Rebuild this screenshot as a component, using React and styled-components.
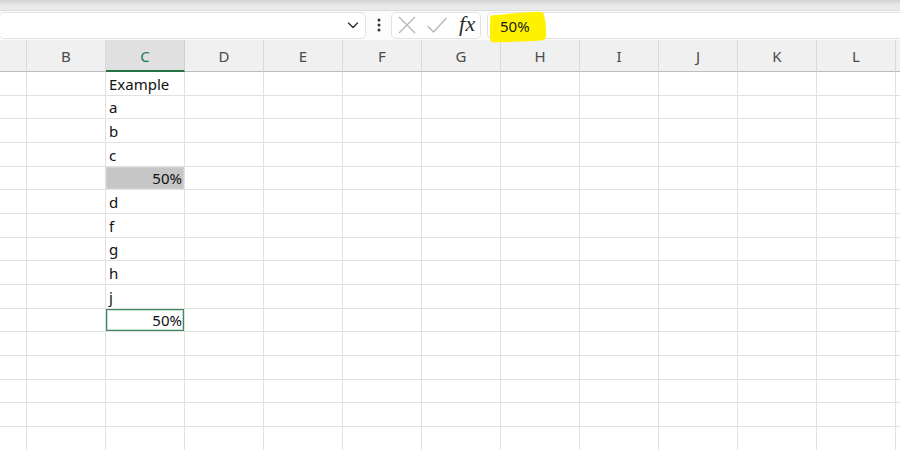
import React from "react";
import styled, { createGlobalStyle } from "styled-components";

const GlobalStyle = createGlobalStyle`
  html, body {
    margin: 0;
    padding: 0;
    background: #ffffff;
    overflow: hidden;
  }
`;

const Page = styled.div`
  width: 900px;
  height: 450px;
  overflow: hidden;
  font-family: "Noto Sans", "Liberation Sans", sans-serif;
  background: #ffffff;
`;

const TopStrip = styled.div`
  height: 11px;
  background: linear-gradient(#d2d2d2, #e6e6e6 45%, #ebebeb);
  border-bottom: 1px solid #dcdcdc;
  box-sizing: border-box;
`;

const FormulaBar = styled.div`
  height: 29px;
  display: flex;
  align-items: center;
  background: #fcfcfc;
  padding: 0 0 1px;
  box-sizing: border-box;
`;

const NameBox = styled.div`
  width: 367px;
  height: 27px;
  margin-left: -1px;
  box-sizing: border-box;
  border: 1px solid #e2e2e2;
  border-radius: 5px;
  background: #ffffff;
  display: flex;
  align-items: center;
  justify-content: flex-end;
  padding-right: 5px;
`;

const Dots = styled.div`
  width: 25px;
  display: flex;
  justify-content: center;
`;

const FxBox = styled.div`
  width: 90px;
  height: 27px;
  box-sizing: border-box;
  border: 1px solid #e2e2e2;
  border-radius: 5px;
  background: #ffffff;
  display: flex;
  align-items: center;
  padding-left: 5px;
  gap: 9px;
`;

const Fx = styled.span`
  font-family: "Liberation Serif", "DejaVu Serif", serif;
  font-style: italic;
  font-size: 22px;
  color: #2b2b2b;
  margin-left: 2px;
  letter-spacing: 0.3px;
  line-height: 1;
  padding-bottom: 3px;
`;

const FormulaInput = styled.div`
  position: relative;
  flex: 1;
  height: 27px;
  margin-left: 6px;
  margin-right: -6px;
  box-sizing: border-box;
  border: 1px solid #e2e2e2;
  border-radius: 5px;
  background: #ffffff;
  display: flex;
  align-items: center;
  padding-left: 12px;
`;

const Highlight = styled.svg`
  position: absolute;
  left: 0;
  top: -3px;
  pointer-events: none;
`;

const FormulaText = styled.span`
  position: relative;
  font-size: 15px;
  color: #1a1a1a;
  padding-top: 1px;
`;

const Sheet = styled.div`
  display: grid;
  grid-template-columns: 27px repeat(11, 79px) 20px;
`;

const HeadCell = styled.div`
  height: 32px;
  box-sizing: border-box;
  background: ${(p) => (p.$active ? "#e0e0e0" : "#f0f0f0")};
  border-right: 1px solid ${(p) => (p.$active ? "#d0d0d0" : "#dadada")};
  border-bottom: ${(p) => (p.$active ? "2px solid #217346" : "1px solid #bcbcbc")};
  color: ${(p) => (p.$active ? "#1b7a50" : "#4a4a4a")};
  font-size: 15px;
  display: flex;
  align-items: center;
  justify-content: center;
  padding-top: ${(p) => (p.$active ? "1px" : "0")};
`;

const Cell = styled.div`
  height: ${(p) => p.$h}px;
  box-sizing: border-box;
  border-right: 1px solid #e1e1e1;
  border-bottom: 1px solid #e1e1e1;
  font-size: 15px;
  color: #111111;
  display: flex;
  align-items: flex-end;
  justify-content: ${(p) => (p.$right ? "flex-end" : "flex-start")};
  padding: 0 2px 1px 3px;
  line-height: 20px;
  white-space: nowrap;
  background: ${(p) => (p.$fill ? "#c6c6c6" : "#ffffff")};
  box-shadow: ${(p) =>
    p.$selected
      ? "inset 0 0 0 1px #3f8a5e, inset 0 0 0 2px #c4ddcd"
      : p.$fill
      ? "inset 0 0 0 1px #d2d2d2"
      : "none"};
`;

const columns = ["", "B", "C", "D", "E", "F", "G", "H", "I", "J", "K", "L", ""];

const cValues = [
  { t: "Example" },
  { t: "a" },
  { t: "b" },
  { t: "c" },
  { t: "50%", right: true, fill: true },
  { t: "d" },
  { t: "f" },
  { t: "g" },
  { t: "h" },
  { t: "j" },
  { t: "50%", right: true, selected: true },
];

const ROWS = 17;
const rowHeights = Array.from({ length: ROWS }, (_, k) =>
  Math.round(72 + (k + 1) * 23.667) - Math.round(72 + k * 23.667)
);

const Chevron = () => (
  <svg width="14" height="14" viewBox="0 0 14 14">
    <path d="M2.5 5 L7 9.5 L11.5 5" fill="none" stroke="#333" strokeWidth="1.4" strokeLinecap="round" strokeLinejoin="round" />
  </svg>
);

const VDots = () => (
  <svg width="4" height="14" viewBox="0 0 4 14">
    <circle cx="2" cy="2" r="1.5" fill="#333" />
    <circle cx="2" cy="7" r="1.5" fill="#333" />
    <circle cx="2" cy="12" r="1.5" fill="#333" />
  </svg>
);

const CrossIcon = () => (
  <svg width="20" height="20" viewBox="0 0 20 20">
    <path d="M2 2 L18 18 M18 2 L2 18" stroke="#b5b5b5" strokeWidth="1.3" fill="none" />
  </svg>
);

const CheckIcon = () => (
  <svg width="22" height="20" viewBox="0 0 22 20">
    <path d="M1.5 11 L7.5 17 L20.5 3" stroke="#b5b5b5" strokeWidth="1.3" fill="none" />
  </svg>
);

export default function App() {
  return (
    <Page>
      <GlobalStyle />
      <TopStrip />
      <FormulaBar>
        <NameBox>
          <Chevron />
        </NameBox>
        <Dots>
          <VDots />
        </Dots>
        <FxBox>
          <CrossIcon />
          <CheckIcon />
          <Fx>fx</Fx>
        </FxBox>
        <FormulaInput>
          <Highlight width="70" height="34" viewBox="0 0 70 34">
            <path
              d="M2.5 5.5 Q20 3.5 48 1.8 Q54 1.2 55.5 3.5 Q58.5 12 58 27 Q57.5 30 53 30.5 Q28 32 6 32.5 Q2.5 32.5 2.2 29 Q1.6 17 2.5 5.5 Z"
              fill="#fff200"
            />
          </Highlight>
          <FormulaText>50%</FormulaText>
        </FormulaInput>
      </FormulaBar>
      <Sheet>
        {columns.map((c, i) => (
          <HeadCell key={"h" + i} $active={c === "C"}>
            {c}
          </HeadCell>
        ))}
        {rowHeights.map((h, r) =>
          columns.map((c, i) => {
            const v = c === "C" ? cValues[r] : null;
            return (
              <Cell
                key={r + "-" + i}
                $h={h}
                $right={v && v.right}
                $fill={v && v.fill}
                $selected={v && v.selected}
              >
                {v ? v.t : ""}
              </Cell>
            );
          })
        )}
      </Sheet>
    </Page>
  );
}
